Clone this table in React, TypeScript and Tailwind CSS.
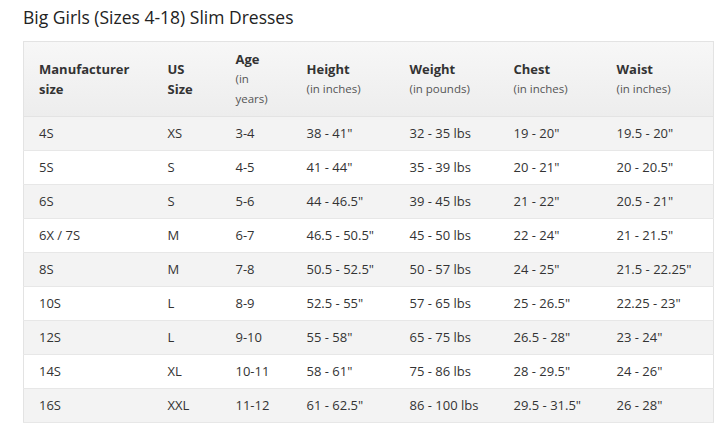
const rows = [
  ['4S', 'XS', '3-4', '38 - 41"', '32 - 35 lbs', '19 - 20"', '19.5 - 20"'],
  ['5S', 'S', '4-5', '41 - 44"', '35 - 39 lbs', '20 - 21"', '20 - 20.5"'],
  ['6S', 'S', '5-6', '44 - 46.5"', '39 - 45 lbs', '21 - 22"', '20.5 - 21"'],
  ['6X / 7S', 'M', '6-7', '46.5 - 50.5"', '45 - 50 lbs', '22 - 24"', '21 - 21.5"'],
  ['8S', 'M', '7-8', '50.5 - 52.5"', '50 - 57 lbs', '24 - 25"', '21.5 - 22.25"'],
  ['10S', 'L', '8-9', '52.5 - 55"', '57 - 65 lbs', '25 - 26.5"', '22.25 - 23"'],
  ['12S', 'L', '9-10', '55 - 58"', '65 - 75 lbs', '26.5 - 28"', '23 - 24"'],
  ['14S', 'XL', '10-11', '58 - 61"', '75 - 86 lbs', '28 - 29.5"', '24 - 26"'],
  ['16S', 'XXL', '11-12', '61 - 62.5"', '86 - 100 lbs', '29.5 - 31.5"', '26 - 28"'],
];

const widths = ['w-[129px]', 'w-[68px]', 'w-[71px]', 'w-[103px]', 'w-[104px]', 'w-[103px]', 'w-[112px]'];

function Head({ title, sub }: { title: string; sub?: string }) {
  return (
    <div>
      <div className="font-bold text-[#333]">{title}</div>
      {sub && <div className="text-[11.5px] text-[#555]">{sub}</div>}
    </div>
  );
}

export default function App() {
  return (
    <div className="w-[725px] h-[431px] bg-white pl-[23px] pt-[5px] font-['Open_Sans',sans-serif] text-[#333]">
      <h2 className="text-[17.5px] leading-[24px] text-[#222]">Big Girls (Sizes 4-18) Slim Dresses</h2>
      <table className="mt-[12px] w-[690px] table-fixed border-collapse border border-[#e3e3e3] text-[13px]">
        <colgroup>
          {widths.map((w, i) => (
            <col key={i} className={w} />
          ))}
        </colgroup>
        <thead>
          <tr className="h-[75px] bg-gradient-to-b from-[#f7f7f7] to-[#ededed] border-b border-[#e3e3e3] leading-[20px] text-left align-middle">
            <th className="pl-[15px] font-normal">
              <div className="font-bold">Manufacturer<br />size</div>
            </th>
            <th className="pl-[15px] font-normal">
              <div className="font-bold">US<br />Size</div>
            </th>
            <th className="pl-[15px] font-normal">
              <Head title="Age" sub="(in" />
              <div className="text-[11.5px] text-[#555]">years)</div>
            </th>
            <th className="pl-[15px] font-normal"><Head title="Height" sub="(in inches)" /></th>
            <th className="pl-[15px] font-normal"><Head title="Weight" sub="(in pounds)" /></th>
            <th className="pl-[15px] font-normal"><Head title="Chest" sub="(in inches)" /></th>
            <th className="pl-[15px] font-normal"><Head title="Waist" sub="(in inches)" /></th>
          </tr>
        </thead>
        <tbody>
          {rows.map((r, i) => (
            <tr key={i} className={`h-[34px] border-b border-[#e7e7e7] ${i % 2 === 0 ? 'bg-[#f3f3f3]' : 'bg-white'}`}>
              {r.map((c, j) => (
                <td key={j} className="pl-[15px] whitespace-nowrap">{c}</td>
              ))}
            </tr>
          ))}
        </tbody>
      </table>
    </div>
  );
}
